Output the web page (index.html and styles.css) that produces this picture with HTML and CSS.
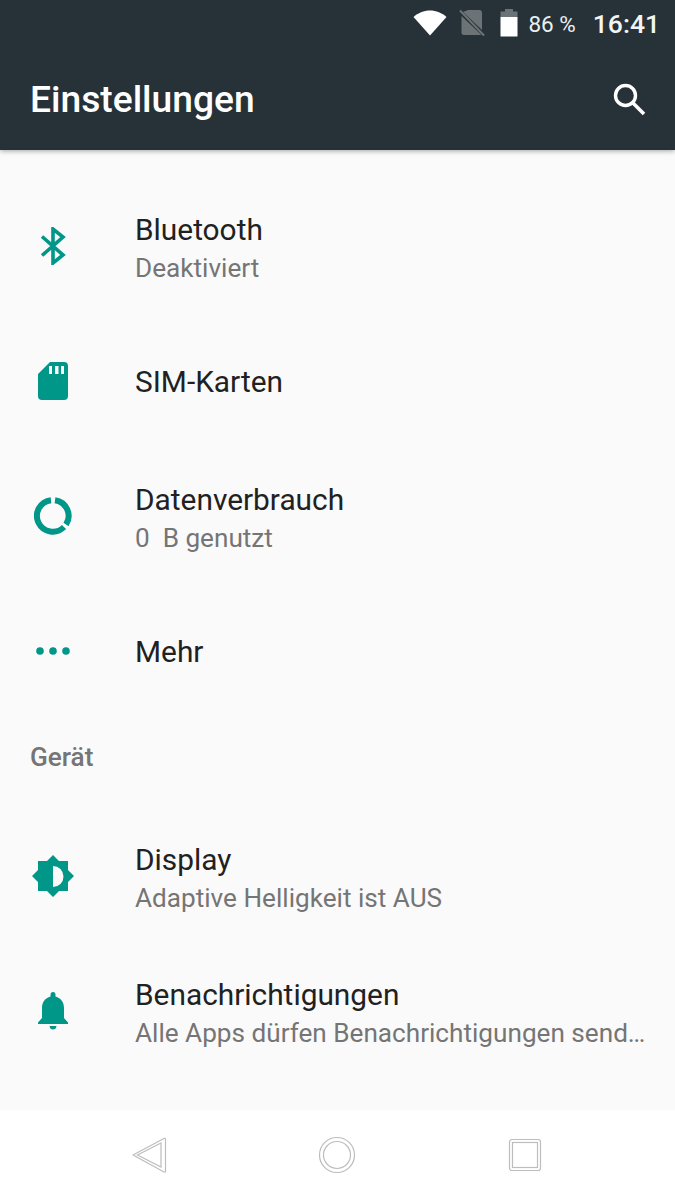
FILE: index.html
```html
<!DOCTYPE html>
<html lang="de">
<head>
<meta charset="utf-8">
<title>Einstellungen</title>
<link rel="stylesheet" href="styles.css">
</head>
<body>
<div class="phone">
  <header class="appbar">
    <div class="status">
      <svg class="st-wifi" width="34" height="26" viewBox="0 0 34 26"><path d="M17 25.500 0.500 7C5 3 10.700 .5 17 .5S29 3 33.500 7Z" fill="#fff"/></svg>
      <svg class="st-sim" width="26" height="28" viewBox="0 0 26 28"><path d="M9 1H20Q23 1 23 4V21L4 3ZM2.500 7 22 25.500Q21.500 26 20 26H5Q2.500 26 2.500 24Z" fill="#6b7376"/><path d="M1 1.500 25 26.500" stroke="#6b7376" stroke-width="2"/></svg>
      <svg class="st-bat" width="18" height="28" viewBox="0 0 18 28"><path d="M5 0H13V2.500H17.500V8H.5V2.500H5Z" fill="#6b7376"/><path d="M.5 8H17.500V27Q17.500 27.500 17 27.500H1Q.5 27.500 .5 27Z" fill="#fff"/></svg>
      <span class="st-pct">86 %</span>
      <span class="st-time">16:41</span>
    </div>
    <div class="toolbar">
      <h1 class="title">Einstellungen</h1>
      <svg class="search" width="36" height="36" viewBox="0 0 36 36"><circle cx="14.500" cy="14.500" r="10" fill="none" stroke="#fff" stroke-width="3.400"/><path d="M21.500 21.500 33 33" stroke="#fff" stroke-width="3.600"/></svg>
    </div>
  </header>
  <main class="content">
    <section class="group">
      <div class="row">
        <div class="icon"><svg width="26" height="38" viewBox="0 0 26 38"><path d="M2 9.500 23 28 13 36V2L23 10 2 28.500" fill="none" stroke="#009688" stroke-width="3.600"/></svg></div>
        <div class="text"><div class="name">Bluetooth</div><div class="sub">Deaktiviert</div></div>
      </div>
      <div class="row">
        <div class="icon"><svg width="30" height="38" viewBox="0 0 30 38"><path fill-rule="evenodd" d="M12 0H26Q30 0 30 4V34Q30 38 26 38H4Q0 38 0 34V12ZM11 4V12H14V4ZM17 4V12H20.500V4ZM23 4V12H26V4Z" fill="#009688"/></svg></div>
        <div class="text single"><div class="name">SIM-Karten</div></div>
      </div>
      <div class="row">
        <div class="icon"><svg width="38" height="38" viewBox="0 0 38 38"><path d="M21 3.200A15.800 15.800 0 0 1 32 27.500M30 30A15.800 15.800 0 1 1 17 3.200" fill="none" stroke="#009688" stroke-width="6"/></svg></div>
        <div class="text"><div class="name">Datenverbrauch</div><div class="sub">0&nbsp; B genutzt</div></div>
      </div>
      <div class="row">
        <div class="icon"><svg width="34" height="8" viewBox="0 0 34 8"><circle cx="4" cy="4" r="3.800" fill="#009688"/><circle cx="17" cy="4" r="3.800" fill="#009688"/><circle cx="30" cy="4" r="3.800" fill="#009688"/></svg></div>
        <div class="text single"><div class="name">Mehr</div></div>
      </div>
    </section>
    <h2 class="heading">Gerät</h2>
    <section class="group">
      <div class="row">
        <div class="icon"><svg width="42" height="42" viewBox="0 0 42 42"><path fill-rule="evenodd" d="M21 0 27 6H36V15L42 21 36 27V36H27L21 42 15 36H6V27L0 21 6 15V6H15ZM21 11V32A10.500 10.500 0 0 0 21 11Z" fill="#009688"/></svg></div>
        <div class="text"><div class="name">Display</div><div class="sub">Adaptive Helligkeit ist AUS</div></div>
      </div>
      <div class="row">
        <div class="icon"><svg width="32" height="38" viewBox="0 0 32 38"><path d="M16 0Q18.500 0 18.500 3V4.500C24 6 27 10.500 27 16V26L31 30.500V32H1V30.500L5 26V16C5 10.500 8 6 13.500 4.500V3Q13.500 0 16 0ZM12.500 34H19.500Q19 37.500 16 37.500T12.500 34Z" fill="#009688"/></svg></div>
        <div class="text"><div class="name">Benachrichtigungen</div><div class="sub line">Alle Apps dürfen Benachrichtigungen send…</div></div>
      </div>
    </section>
  </main>
  <nav class="navbar">
    <svg width="36" height="38" viewBox="0 0 36 38"><path d="M32 2.500 1 19 32 36Q33.500 36.500 33.500 35V3.500Q33.500 2 32 2.500Z" fill="none" stroke="#bdbdbd" stroke-width="1.200" stroke-linejoin="round"/><path d="M29 7 5.500 19 29 31Z" fill="none" stroke="#bdbdbd" stroke-width="1.200"/></svg>
    <svg width="38" height="38" viewBox="0 0 38 38"><circle cx="19" cy="19" r="17.500" fill="none" stroke="#bdbdbd" stroke-width="1.200"/><circle cx="19" cy="19" r="13.500" fill="none" stroke="#bdbdbd" stroke-width="1.200"/></svg>
    <svg width="36" height="36" viewBox="0 0 36 36"><rect x="3.500" y="2.500" width="31" height="31" rx="2.500" fill="none" stroke="#bdbdbd" stroke-width="1.200"/><rect x="6.500" y="5.500" width="25" height="25" fill="none" stroke="#bdbdbd" stroke-width="1.200"/></svg>
  </nav>
</div>
</body>
</html>
```
FILE: styles.css
```css
* { box-sizing: border-box; }
html, body { margin: 0; padding: 0; }
body { font-family: Roboto, "Noto Sans", sans-serif; background: #fafafa; }
.phone { width: 675px; height: 1200px; display: flex; flex-direction: column; overflow: hidden; }

.appbar { height: 150px; flex: none; background: #263238; color: #fff; box-shadow: 0 1px 5px rgba(0,0,0,.35); position: relative; z-index: 1; }
.status { height: 47px; display: flex; align-items: center; justify-content: flex-end; padding-right: 15px; }
.status svg { margin-bottom: 2px; }
.st-wifi { margin-right: 12px; }
.st-sim { margin-right: 15px; }
.st-bat { margin-right: 10px; }
.st-pct { font-size: 22.500px; color: #eceff1; margin-right: 17px; padding-top: 1px; }
.st-time { font-size: 26.500px; font-weight: 500; color: #f3f5f5; }

.toolbar { height: 103px; display: flex; align-items: center; justify-content: space-between; padding: 0 28px 0 30px; }
.title { margin: 0; font-size: 37.200px; font-weight: 500; }
.search { display: block; }

.content { flex: 1; background: #fafafa; padding-top: 30px; }
.row { height: 135px; display: flex; align-items: center; }
.icon { width: 135px; flex: none; display: flex; justify-content: center; padding: 0 30px 3px 0; }
.icon svg { display: block; }
.text { flex: 1; min-width: 0; padding: 2px 30px 0 0; }
.single { padding: 0 30px 1px 0; }
.name { font-size: 29.850px; line-height: 38px; color: #212121; }
.sub { font-size: 26.150px; line-height: 38px; color: #757575; }
.line { white-space: nowrap; }
.heading { margin: 0 0 15px; padding: 0 0 2px 30px; height: 75px; display: flex; align-items: center; font-size: 26.150px; font-weight: 500; color: #757575; }

.navbar { height: 90px; flex: none; background: #fff; display: flex; align-items: center; gap: 150px; padding-left: 132px; }
.navbar svg { display: block; }
```
